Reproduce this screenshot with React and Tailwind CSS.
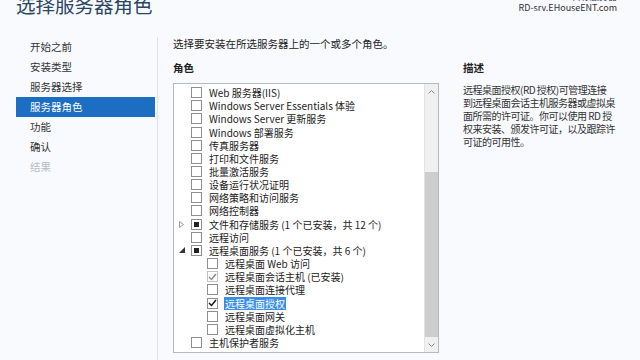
import React from 'react';

// Left wizard steps
const steps = [
  { label: '开始之前' },
  { label: '安装类型' },
  { label: '服务器选择' },
  { label: '服务器角色', active: true },
  { label: '功能' },
  { label: '确认' },
  { label: '结果', disabled: true },
];

// Role tree rows: level, state (empty | partial | checked | checkedDim), expander
const roles = [
  { text: 'Web 服务器(IIS)' },
  { text: 'Windows Server Essentials 体验' },
  { text: 'Windows Server 更新服务' },
  { text: 'Windows 部署服务' },
  { text: '传真服务器' },
  { text: '打印和文件服务' },
  { text: '批量激活服务' },
  { text: '设备运行状况证明' },
  { text: '网络策略和访问服务' },
  { text: '网络控制器' },
  { text: '文件和存储服务 (1 个已安装，共 12 个)', state: 'partial', expander: 'closed' },
  { text: '远程访问' },
  { text: '远程桌面服务 (1 个已安装，共 6 个)', state: 'partial', expander: 'open' },
  { text: '远程桌面 Web 访问', level: 1 },
  { text: '远程桌面会话主机 (已安装)', level: 1, state: 'checkedDim' },
  { text: '远程桌面连接代理', level: 1 },
  { text: '远程桌面授权', level: 1, state: 'checked', selected: true },
  { text: '远程桌面网关', level: 1 },
  { text: '远程桌面虚拟化主机', level: 1 },
  { text: '主机保护者服务' },
];

const font = { fontFamily: '"Noto Sans CJK SC", "Noto Sans", sans-serif' };

function Expander({ kind }) {
  if (kind === 'closed') {
    return (
      <svg width="5" height="7" viewBox="0 0 5 7">
        <path d="M0.5 0.5 L4.5 3.5 L0.5 6.5 Z" fill="none" stroke="#9a9a9a" strokeWidth="1" />
      </svg>
    );
  }
  if (kind === 'open') {
    return (
      <svg width="6" height="6" viewBox="0 0 6 6">
        <path d="M6 0 L6 6 L0 6 Z" fill="#333" />
      </svg>
    );
  }
  return null;
}

function CheckBox({ state }) {
  const dim = state === 'checkedDim';
  return (
    <span className={`w-[11px] h-[11px] shrink-0 flex items-center justify-center bg-white border ${dim ? 'border-[#c4c4c4]' : 'border-[#8e8f8f]'}`}>
      {state === 'partial' && <span className="w-[5px] h-[5px] bg-[#222]" />}
      {(state === 'checked' || dim) && (
        <svg width="9" height="8" viewBox="0 0 9 8">
          <path d="M1 4 L3.5 6.5 L8 1" fill="none" stroke={dim ? '#8a8a8a' : '#111'} strokeWidth="1.4" />
        </svg>
      )}
    </span>
  );
}

function Chevron({ up }) {
  return (
    <svg width="7" height="4" viewBox="0 0 7 4">
      <path d={up ? 'M0.5 3.5 L3.5 0.5 L6.5 3.5' : 'M0.5 0.5 L3.5 3.5 L6.5 0.5'} fill="none" stroke="#8a8a8a" strokeWidth="1" />
    </svg>
  );
}

export default function App() {
  return (
    <div className="w-[640px] h-[360px] overflow-hidden bg-[#f8fafd] text-[#222] text-[10.5px]" style={font}>
      {/* header */}
      <div className="h-[37px] flex justify-between">
        <div className="pl-4 mt-[-5px] text-[19.5px] leading-[20px] text-[#2a4665]">选择服务器角色</div>
        <div className="pr-[23px] mt-[-9px] flex flex-col items-end text-[9px] leading-[11px] text-[#333]">
          <span>目标服务器</span>
          <span>RD-srv.EHouseENT.com</span>
        </div>
      </div>

      <div className="flex h-[323px]">
        {/* wizard steps */}
        <div className="w-[158px] shrink-0 border-r border-[#dde3ea] pl-4 pr-[2px]">
          {steps.map((s) => (
            <div
              key={s.label}
              className={`h-5 flex items-center pl-[14px] text-[10.5px] ${s.active ? 'bg-[#1b6ec2] text-white' : s.disabled ? 'text-[#b8bcc2]' : 'text-[#333]'}`}
            >
              {s.label}
            </div>
          ))}
        </div>

        {/* content */}
        <div className="pl-[15px] flex-1">
          <div className="h-[14px] leading-[14px]">选择要安装在所选服务器上的一个或多个角色。</div>
          <div className="flex mt-[10px] gap-[24px]">
            <div className="w-[266px]">
              <div className="h-[14px] leading-[14px] font-bold">角色</div>
              <div className="mt-[8px] h-[270px] border border-[#b5b9bf] bg-white flex text-[10px]">
                <div className="flex-1 pt-[2px]">
                  {roles.map((r) => (
                    <div key={r.text} className={`h-[13.16px] flex items-center whitespace-nowrap ${r.level === 1 ? 'pl-[16px]' : ''}`}>
                      <span className="w-[17px] shrink-0 flex items-center pl-[5px]">
                        <Expander kind={r.expander} />
                      </span>
                      <CheckBox state={r.state} />
                      <span className={`ml-[6px] leading-[13px] px-[1px] ${r.selected ? 'bg-[#3b8ee5] text-white' : ''}`}>{r.text}</span>
                    </div>
                  ))}
                </div>
                <div className="w-[14px] border-l border-[#e2e2e2] bg-[#f0f0f0] flex flex-col">
                  <div className="h-[16px] flex items-center justify-center"><Chevron up /></div>
                  <div className="h-[72px]" />
                  <div className="h-[165px] bg-[#cdcdcd]" />
                  <div className="flex-1 flex items-center justify-center"><Chevron /></div>
                </div>
              </div>
            </div>

            <div>
              <div className="h-[14px] leading-[14px] font-bold">描述</div>
              <div className="mt-[8px] leading-[13px] whitespace-nowrap text-[#333] text-[10px] tracking-[-0.5px]">
                <div>远程桌面授权(RD 授权)可管理连接</div>
                <div>到远程桌面会话主机服务器或虚拟桌</div>
                <div>面所需的许可证。你可以使用 RD 授</div>
                <div>权来安装、颁发许可证，以及跟踪许</div>
                <div>可证的可用性。</div>
              </div>
            </div>
          </div>
        </div>
      </div>
    </div>
  );
}
